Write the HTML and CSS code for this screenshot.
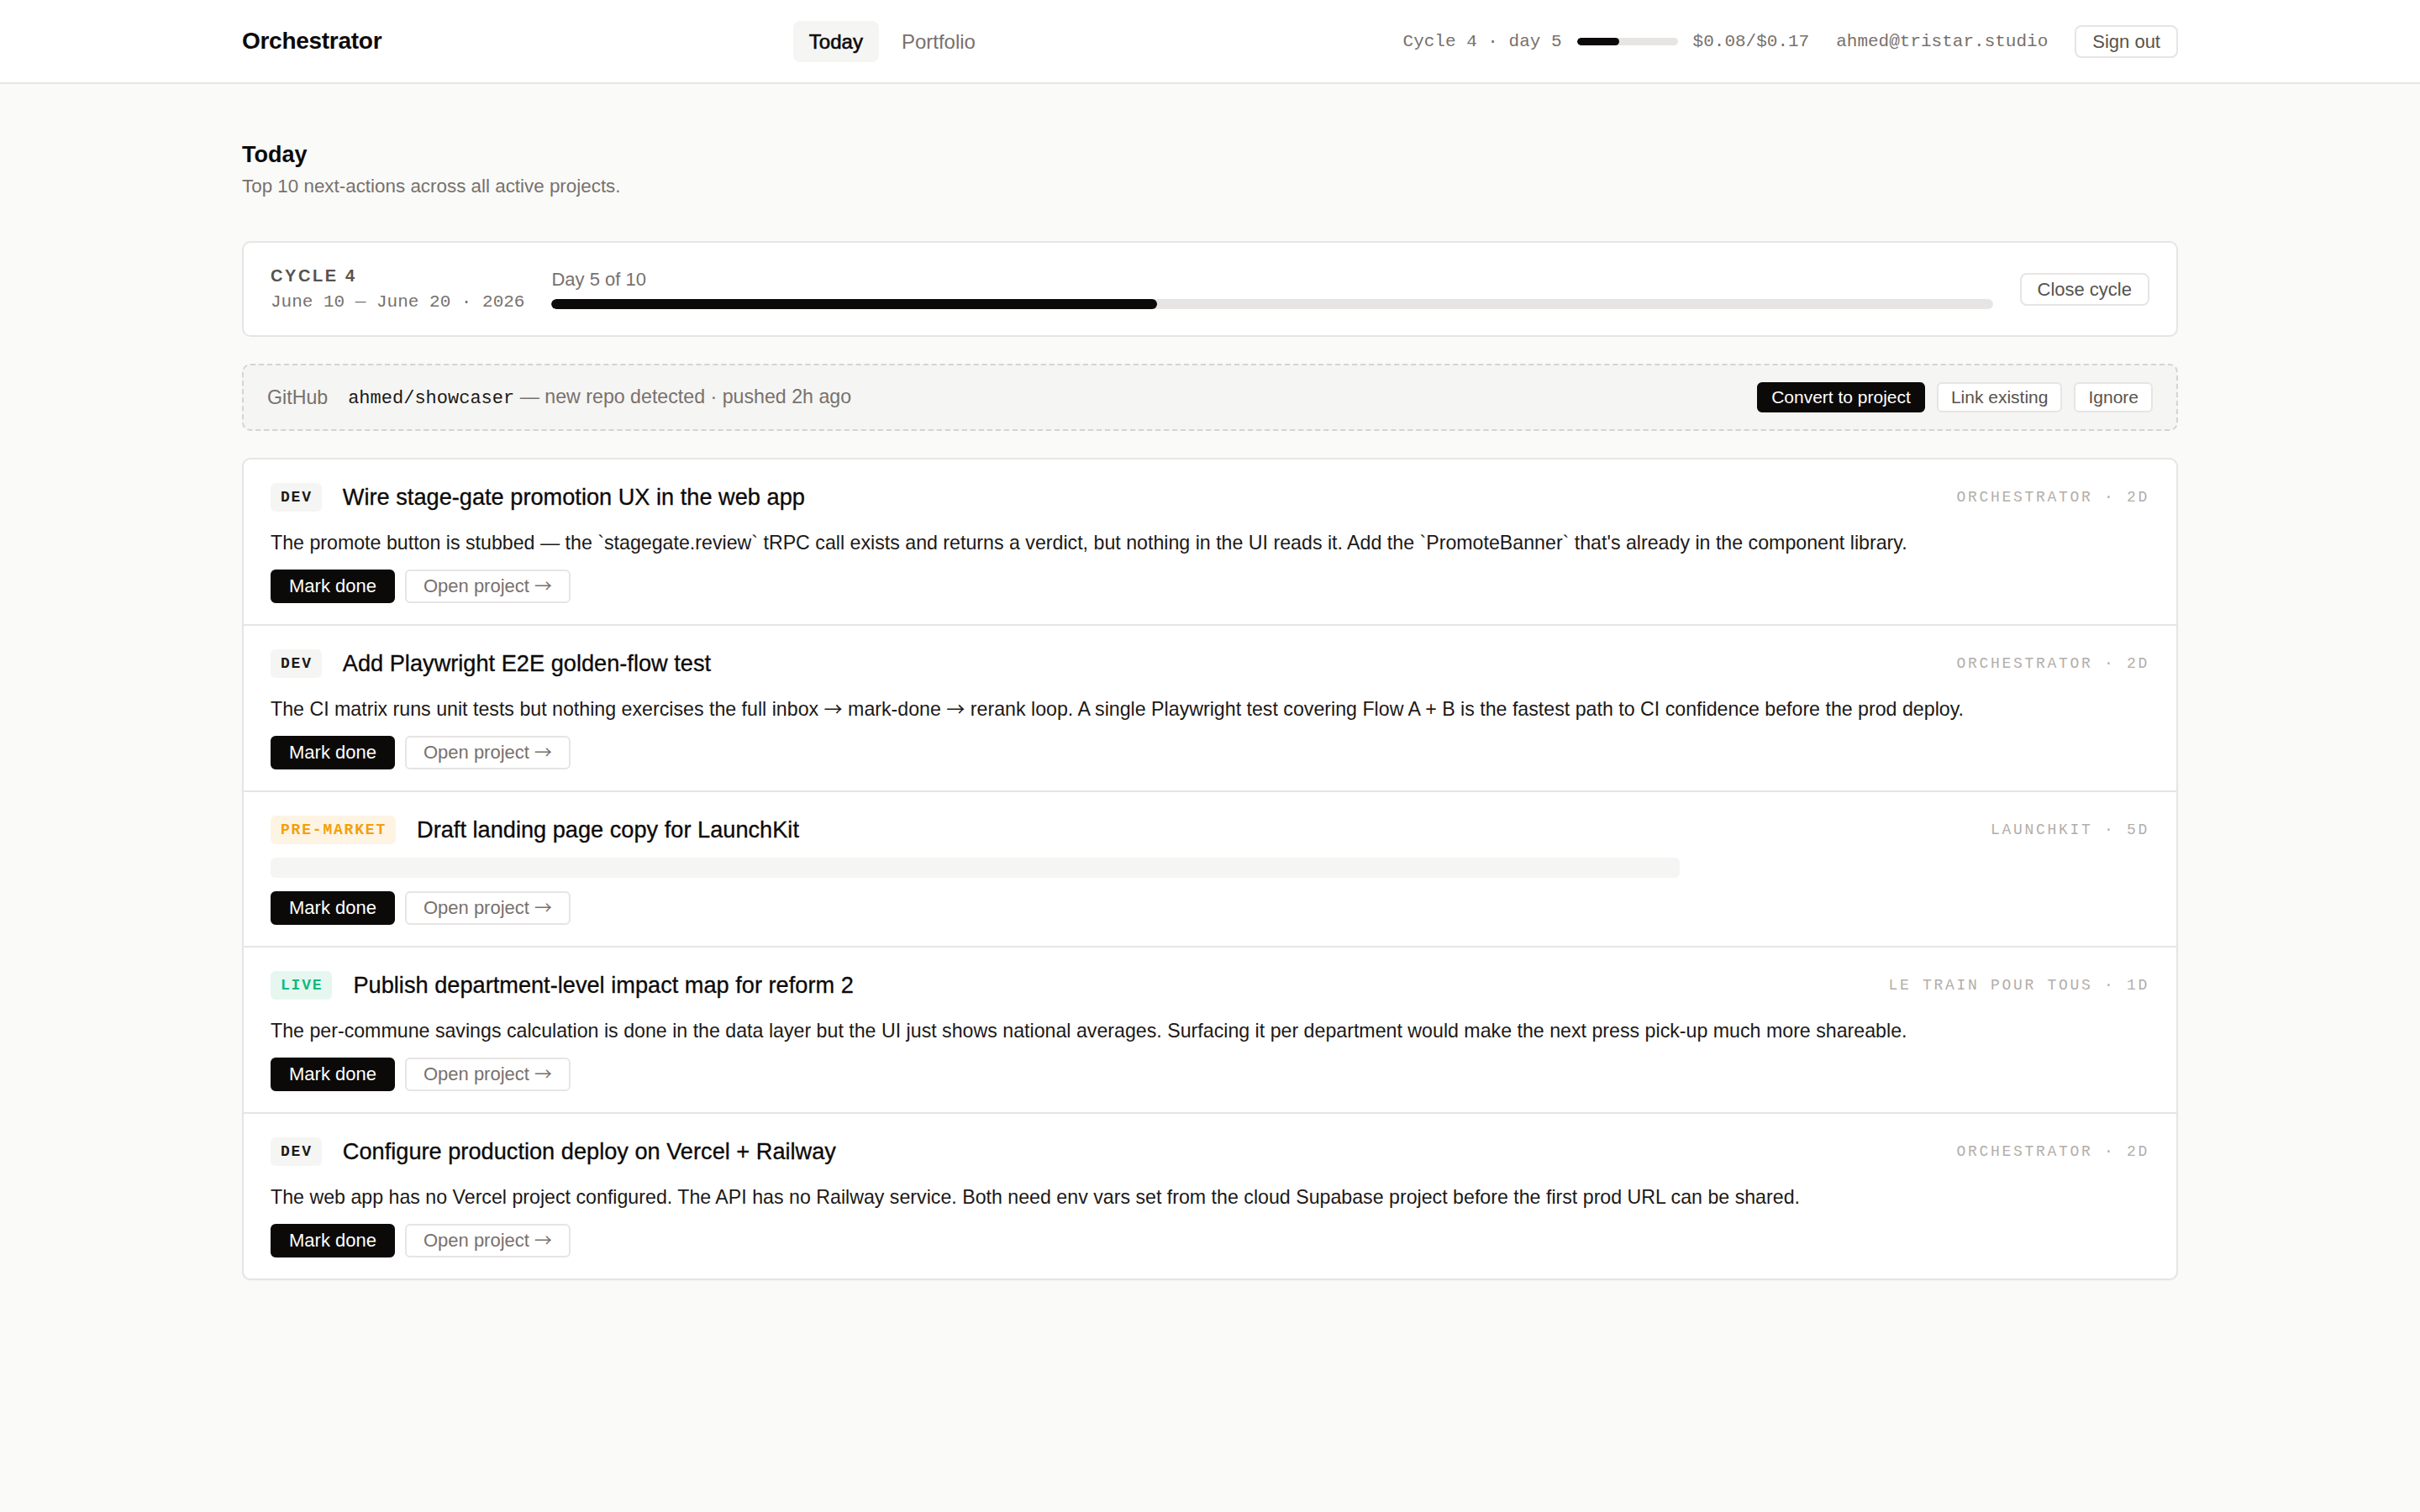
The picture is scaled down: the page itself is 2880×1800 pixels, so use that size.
FILE: index.html
```html
<!DOCTYPE html>
<html lang="en">
<head>
  <meta charset="UTF-8">
  <meta name="viewport" content="width=device-width, initial-scale=1.0">
  <title>Orchestrator · Today</title>
  <link rel="stylesheet" href="styles.css">
</head>
<body>
  <header class="topbar">
    <div class="topbar-inner">
      <a class="brand" href="#">Orchestrator</a>
      <nav class="tabs">
        <a class="tab active" href="#">Today</a>
        <a class="tab" href="#">Portfolio</a>
      </nav>
      <div class="account">
        <div class="budget">
          <span class="mono-note">Cycle 4 · day 5</span>
          <span class="meter"><span class="meter-fill" style="width: 42%"></span></span>
          <span class="mono-note">$0.08/$0.17</span>
        </div>
        <span class="mono-note">ahmed@tristar.studio</span>
        <button class="btn btn-head">Sign out</button>
      </div>
    </div>
  </header>

  <main class="page">
    <div class="page-head">
      <h1>Today</h1>
      <p>Top 10 next-actions across all active projects.</p>
    </div>

    <section class="cycle-card">
      <div class="cycle-info">
        <div class="cycle-label">CYCLE 4</div>
        <div class="cycle-dates">June 10 — June 20 · 2026</div>
      </div>
      <div class="cycle-progress">
        <div class="cycle-day">Day 5 of 10</div>
        <div class="bar"><div class="bar-fill" style="width: 42%"></div></div>
      </div>
      <button class="btn btn-head">Close cycle</button>
    </section>

    <section class="detect">
      <span class="detect-source">GitHub</span>
      <p class="detect-text"><code>ahmed/showcaser</code> — new repo detected · pushed 2h ago</p>
      <div class="detect-actions">
        <button class="btn btn-xs btn-dark">Convert to project</button>
        <button class="btn btn-xs">Link existing</button>
        <button class="btn btn-xs">Ignore</button>
      </div>
    </section>

    <ul class="tasks">
      <li class="task">
        <div class="task-head">
          <span class="tag">DEV</span>
          <h3 class="task-title">Wire stage-gate promotion UX in the web app</h3>
          <span class="task-meta">ORCHESTRATOR · 2D</span>
        </div>
        <p class="task-desc">The promote button is stubbed — the `stagegate.review` tRPC call exists and returns a verdict, but nothing in the UI reads it. Add the `PromoteBanner` that's already in the component library.</p>
        <div class="task-actions">
          <button class="btn btn-dark">Mark done</button>
          <button class="btn btn-light">Open project <span class="arrow">→</span></button>
        </div>
      </li>
      <li class="task">
        <div class="task-head">
          <span class="tag">DEV</span>
          <h3 class="task-title">Add Playwright E2E golden-flow test</h3>
          <span class="task-meta">ORCHESTRATOR · 2D</span>
        </div>
        <p class="task-desc">The CI matrix runs unit tests but nothing exercises the full inbox <span class="arrow">→</span> mark-done <span class="arrow">→</span> rerank loop. A single Playwright test covering Flow A + B is the fastest path to CI confidence before the prod deploy.</p>
        <div class="task-actions">
          <button class="btn btn-dark">Mark done</button>
          <button class="btn btn-light">Open project <span class="arrow">→</span></button>
        </div>
      </li>
      <li class="task">
        <div class="task-head">
          <span class="tag tag-market">PRE-MARKET</span>
          <h3 class="task-title">Draft landing page copy for LaunchKit</h3>
          <span class="task-meta">LAUNCHKIT · 5D</span>
        </div>
        <div class="task-skeleton"></div>
        <div class="task-actions">
          <button class="btn btn-dark">Mark done</button>
          <button class="btn btn-light">Open project <span class="arrow">→</span></button>
        </div>
      </li>
      <li class="task">
        <div class="task-head">
          <span class="tag tag-live">LIVE</span>
          <h3 class="task-title">Publish department-level impact map for reform 2</h3>
          <span class="task-meta">LE TRAIN POUR TOUS · 1D</span>
        </div>
        <p class="task-desc">The per-commune savings calculation is done in the data layer but the UI just shows national averages. Surfacing it per department would make the next press pick-up much more shareable.</p>
        <div class="task-actions">
          <button class="btn btn-dark">Mark done</button>
          <button class="btn btn-light">Open project <span class="arrow">→</span></button>
        </div>
      </li>
      <li class="task">
        <div class="task-head">
          <span class="tag">DEV</span>
          <h3 class="task-title">Configure production deploy on Vercel + Railway</h3>
          <span class="task-meta">ORCHESTRATOR · 2D</span>
        </div>
        <p class="task-desc">The web app has no Vercel project configured. The API has no Railway service. Both need env vars set from the cloud Supabase project before the first prod URL can be shared.</p>
        <div class="task-actions">
          <button class="btn btn-dark">Mark done</button>
          <button class="btn btn-light">Open project <span class="arrow">→</span></button>
        </div>
      </li>
    </ul>
  </main>
</body>
</html>
```

FILE: styles.css
```css
* {
  margin: 0;
  padding: 0;
  box-sizing: border-box;
}
body {
  background-color: #fafaf9;
  color: #1c1917;
  font-family: "Liberation Sans", Arial, Helvetica, sans-serif;
}
a {
  text-decoration: none;
}
.arrow {
  font-family: "Noto Sans CJK SC", "DejaVu Sans", sans-serif;
  font-size: 0.95em;
  line-height: 0;
}

/* top bar */
.topbar {
  background-color: #fff;
  border-bottom: 2px solid #e7e5e4;
}
.topbar-inner {
  width: 2304px;
  height: 98px;
  margin: 0 auto;
  display: flex;
  align-items: center;
  justify-content: space-between;
}
.brand {
  font-size: 28px;
  font-weight: 700;
  letter-spacing: -0.01em;
  color: #0c0a09;
}
.tabs {
  display: flex;
  gap: 8px;
}
.tab {
  font-size: 24px;
  line-height: 25px;
  padding: 12px 19px;
  border-radius: 8px;
  color: #78716c;
}
.tab.active {
  background-color: #f5f5f4;
  color: #0c0a09;
  -webkit-text-stroke: 0.6px #0c0a09;
}
.account {
  display: flex;
  align-items: center;
  gap: 32px;
}
.budget {
  display: flex;
  align-items: center;
  gap: 18px;
}
.mono-note {
  font-family: "Liberation Mono", "Courier New", monospace;
  font-size: 21px;
  color: #78716c;
}
.meter {
  display: block;
  width: 120px;
  height: 9px;
  border-radius: 9px;
  background-color: #e7e5e4;
  overflow: hidden;
}
.meter-fill {
  display: block;
  height: 100%;
  border-radius: 9px;
  background-color: #0c0a09;
}

/* buttons */
.btn {
  font-family: inherit;
  font-size: 22px;
  line-height: 26px;
  padding: 5px 20px;
  border: 2px solid #e7e5e4;
  border-radius: 6px;
  background-color: #fff;
  color: #57534e;
  cursor: pointer;
  white-space: nowrap;
}
.btn-head {
  line-height: 25px;
  padding: 5px 19px;
  border-radius: 8px;
}
.btn-light {
  color: #78716c;
}
.btn-dark {
  background-color: #0c0a09;
  border-color: #0c0a09;
  color: #fff;
}
.btn-xs {
  font-size: 21px;
  line-height: 24px;
  padding: 4px 15px;
}

/* page */
.page {
  width: 2304px;
  margin: 0 auto;
  padding: 66px 0 80px;
}
.page-head h1 {
  font-size: 27px;
  line-height: 36px;
  font-weight: 700;
  color: #0c0a09;
  margin-bottom: 4px;
}
.page-head p {
  font-size: 22.4px;
  line-height: 32px;
  color: #78716c;
}

/* cycle */
.cycle-card {
  margin-top: 49px;
  display: flex;
  align-items: center;
  gap: 32px;
  padding: 27px 32px;
  background-color: #fff;
  border: 2px solid #e7e5e4;
  border-radius: 10px;
}
.cycle-label {
  font-size: 20px;
  line-height: 24px;
  font-weight: 700;
  letter-spacing: 0.13em;
  color: #57534e;
}
.cycle-dates {
  margin-top: 8px;
  font-family: "Liberation Mono", "Courier New", monospace;
  font-size: 21px;
  line-height: 24px;
  color: #78716c;
  white-space: nowrap;
}
.cycle-progress {
  flex: 1;
}
.cycle-day {
  font-size: 22px;
  line-height: 26px;
  color: #78716c;
  margin-bottom: 10px;
}
.bar {
  height: 12px;
  border-radius: 6px;
  background-color: #e7e5e4;
  overflow: hidden;
}
.bar-fill {
  height: 100%;
  border-radius: 6px;
  background-color: #0c0a09;
}

/* detected repo */
.detect {
  margin-top: 32px;
  display: flex;
  align-items: center;
  gap: 24px;
  padding: 20px 28px;
  background-color: #f5f5f4;
  border: 2px dashed #d6d3d1;
  border-radius: 10px;
}
.detect-source {
  font-size: 23.2px;
  color: #78716c;
}
.detect-text {
  flex: 1;
  font-size: 23.2px;
  color: #78716c;
}
.detect-text code {
  font-family: "Liberation Mono", "Courier New", monospace;
  font-size: 22px;
  color: #1c1917;
}
.detect-actions {
  display: flex;
  gap: 14px;
}

/* task list */
.tasks {
  margin-top: 32px;
  list-style: none;
  background-color: #fff;
  border: 2px solid #e7e5e4;
  border-radius: 10px;
  box-shadow: 0 1px 2px rgba(0, 0, 0, .03);
  overflow: hidden;
}
.task {
  padding: 28px 32px 25px;
  border-top: 2px solid #e7e5e4;
}
.task:first-child {
  border-top: none;
}
.task-head {
  display: flex;
  align-items: center;
  gap: 25px;
}
.tag {
  font-family: "Liberation Mono", "Courier New", monospace;
  font-size: 18px;
  font-weight: 700;
  letter-spacing: 0.1em;
  line-height: 34px;
  padding: 0 11px 0 12px;
  border-radius: 6px;
  background-color: #f5f5f4;
  color: #1c1917;
}
.tag-market {
  background-color: #fef4e4;
  color: #f59e0b;
}
.tag-live {
  background-color: #e6f7f0;
  color: #10b981;
}
.task-title {
  font-size: 27.2px;
  line-height: 34px;
  font-weight: 400;
  color: #0c0a09;
  -webkit-text-stroke: 0.3px #0c0a09;
}
.task-meta {
  margin-left: auto;
  font-family: "Liberation Mono", "Courier New", monospace;
  font-size: 18px;
  letter-spacing: 0.15em;
  color: #b3aea9;
  white-space: nowrap;
}
.task-desc {
  margin: 20px 0 15px;
  font-size: 23.2px;
  line-height: 34px;
  color: #1c1917;
}
.task-skeleton {
  width: 75%;
  height: 24px;
  margin: 16px 0;
  border-radius: 6px;
  background-color: #f5f5f4;
}
.task-actions {
  display: flex;
  gap: 12px;
}
```
